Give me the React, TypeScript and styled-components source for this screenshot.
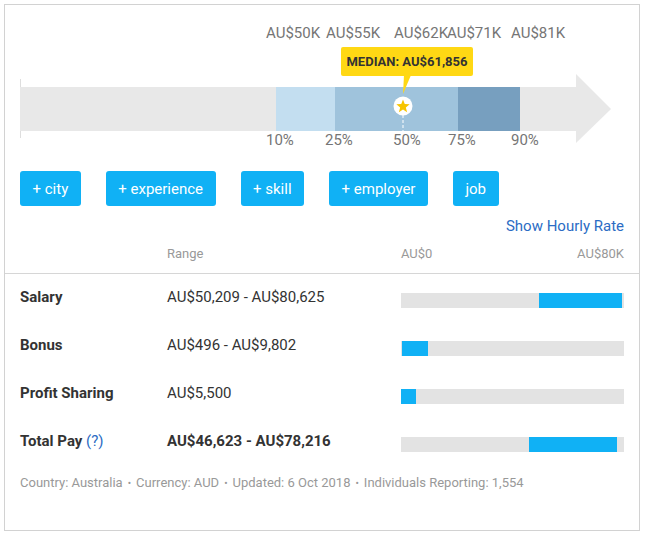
import React from 'react'
import styled, { createGlobalStyle } from 'styled-components'

const GlobalStyle = createGlobalStyle`
    html, body {
        margin: 0;
        padding: 0;
        background: #fff;
    }
    body {
        padding: 4px;
        font-family: Roboto, "Liberation Sans", Arial, sans-serif;
        color: #333;
    }
`

const topLabels = [
    { text: 'AU$50K', x: 246 },
    { text: 'AU$55K', x: 306 },
    { text: 'AU$62K', x: 374 },
    { text: 'AU$71K', x: 427 },
    { text: 'AU$81K', x: 491 },
]

const percentLabels = [
    { text: '10%', x: 246 },
    { text: '25%', x: 305 },
    { text: '50%', x: 373 },
    { text: '75%', x: 428 },
    { text: '90%', x: 491 },
]

const filters = ['+ city', '+ experience', '+ skill', '+ employer', 'job']

// bar scale: AU$0 .. AU$80K over the bar track
const rows = [
    { label: 'Salary', range: 'AU$50,209 - AU$80,625', from: 61.8, to: 99.2 },
    { label: 'Bonus', range: 'AU$496 - AU$9,802', from: 0.5, to: 12.2 },
    { label: 'Profit Sharing', range: 'AU$5,500', from: 0, to: 6.8 },
    { label: 'Total Pay', range: 'AU$46,623 - AU$78,216', from: 57.4, to: 97, total: true },
]

const facts = ['Country: Australia', 'Currency: AUD', 'Updated: 6 Oct 2018', 'Individuals Reporting: 1,554']

const starPoints = (cx: number, cy: number, outer: number, inner: number) => {
    const pts: string[] = []
    for (let i = 0; i < 10; i++) {
        const r = i % 2 === 0 ? outer : inner
        const a = (Math.PI / 5) * i - Math.PI / 2
        pts.push(`${(cx + r * Math.cos(a)).toFixed(2)},${(cy + r * Math.sin(a)).toFixed(2)}`)
    }
    return pts.join(' ')
}

export default function App() {
    return (
        <>
            <GlobalStyle />
            <Card>
                <TopSection>
                    <Chart>
                        <svg width="606" height="150" viewBox="0 0 606 150">
                            <line x1="0.5" y1="74" x2="0.5" y2="133" stroke="#dedede" strokeWidth="1" />
                            <rect x="0" y="82" width="556" height="44" fill="#e8e8e8" />
                            <polygon points="556,69 591,104 556,138" fill="#e8e8e8" />
                            <rect x="256" y="82" width="59" height="44" fill="#c3def0" />
                            <rect x="315" y="82" width="123" height="44" fill="#9fc3dc" />
                            <rect x="438" y="82" width="62" height="44" fill="#779fbf" />
                            <line x1="383" y1="110" x2="383" y2="126" stroke="#fff" strokeWidth="1" strokeDasharray="3 2" />
                            <polygon points="384,70 391,70 383,89" fill="#ffd814" />
                            <circle cx="383" cy="101" r="9.5" fill="#fff" />
                            <polygon points={starPoints(383, 101.5, 7, 3)} fill="#f7c500" />
                        </svg>
                        {topLabels.map((l) => (
                            <ValueLabel key={l.text} style={{ left: l.x }}>{l.text}</ValueLabel>
                        ))}
                        {percentLabels.map((l) => (
                            <PercentLabel key={l.text} style={{ left: l.x }}>{l.text}</PercentLabel>
                        ))}
                        <Median>MEDIAN: AU$61,856</Median>
                    </Chart>
                    <Filters>
                        {filters.map((f) => (
                            <FilterButton key={f}>{f}</FilterButton>
                        ))}
                    </Filters>
                    <HourlyRow>
                        <Link>Show Hourly Rate</Link>
                    </HourlyRow>
                    <HeaderRow>
                        <span />
                        <span>Range</span>
                        <ScaleHead>
                            <span>AU$0</span>
                            <span>AU$80K</span>
                        </ScaleHead>
                    </HeaderRow>
                </TopSection>
                <TableSection>
                    {rows.map((r) => (
                        <Row key={r.label}>
                            <RowLabel>
                                {r.label}
                                {r.total && <Help> (?)</Help>}
                            </RowLabel>
                            <RowRange $bold={!!r.total}>{r.range}</RowRange>
                            <Track>
                                <Fill style={{ left: `${r.from}%`, width: `${r.to - r.from}%` }} />
                            </Track>
                        </Row>
                    ))}
                    <Footer>
                        {facts.map((f, k) => (
                            <React.Fragment key={f}>
                                {k > 0 && <Dot>•</Dot>}
                                {f}
                            </React.Fragment>
                        ))}
                    </Footer>
                </TableSection>
            </Card>
        </>
    )
}

const Card = styled.div`
    width: 634px;
    border: 1px solid #d2d2d2;
    background: #fff;
`

const TopSection = styled.div`
    padding: 0 15px;
`

const Chart = styled.div`
    position: relative;
    height: 150px;
    svg {
        display: block;
    }
`

const ValueLabel = styled.div`
    position: absolute;
    top: 19px;
    font-size: 15px;
    line-height: 18px;
    color: #757575;
    white-space: nowrap;
`

const PercentLabel = styled(ValueLabel)`
    top: 126px;
`

const Median = styled.div`
    position: absolute;
    left: 321px;
    top: 42px;
    width: 132px;
    height: 29px;
    background: #ffd814;
    border-radius: 2px;
    display: flex;
    align-items: center;
    justify-content: center;
    font-size: 13px;
    font-weight: 700;
    color: #333;
    white-space: nowrap;
`

const Filters = styled.div`
    display: flex;
    gap: 25px;
    margin-top: 16px;
`

const FilterButton = styled.button`
    height: 35px;
    padding: 0 12.5px;
    border: 0;
    border-radius: 3px;
    background: #10b1f5;
    color: #fff;
    font-family: inherit;
    font-size: 15px;
    cursor: pointer;
`

const HourlyRow = styled.div`
    display: flex;
    justify-content: flex-end;
    margin-top: 11px;
    line-height: 18px;
`

const Link = styled.a`
    font-size: 15px;
    color: #2b6cc4;
    cursor: pointer;
`

const HeaderRow = styled.div`
    display: grid;
    grid-template-columns: 147px 234px 1fr;
    margin-top: 11px;
    padding-bottom: 11px;
    font-size: 13px;
    line-height: 16px;
    color: #999;
`

const ScaleHead = styled.div`
    display: flex;
    justify-content: space-between;
`

const TableSection = styled.div`
    border-top: 1px solid #d6d6d6;
    padding: 14px 15px 38px;
    display: flex;
    flex-direction: column;
    gap: 28px;
`

const Row = styled.div`
    display: grid;
    grid-template-columns: 147px 234px 1fr;
    align-items: start;
    line-height: 18px;
    font-size: 15px;
`

const RowLabel = styled.div`
    font-weight: 700;
    color: #333;
`

const Help = styled.span`
    font-weight: 400;
    color: #2b6cc4;
`

const RowRange = styled.div<{ $bold: boolean }>`
    font-weight: ${(p) => (p.$bold ? 700 : 400)};
    color: #333;
`

const Track = styled.div`
    position: relative;
    height: 15px;
    margin-top: 5px;
    background: #e3e3e3;
`

const Fill = styled.div`
    position: absolute;
    top: 0;
    bottom: 0;
    background: #10b1f5;
`

const Footer = styled.div`
    margin-top: -5px;
    font-size: 13px;
    line-height: 16px;
    color: #999;
    white-space: nowrap;
`

const Dot = styled.span`
    margin: 0 5px;
    font-size: 10px;
`
